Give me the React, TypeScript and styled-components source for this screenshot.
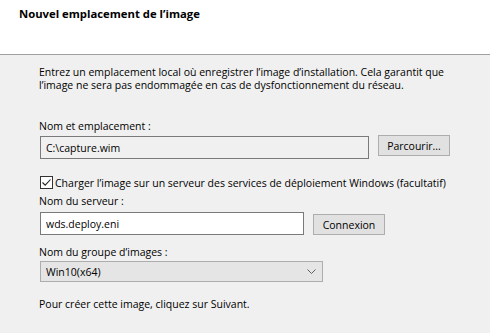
import React from 'react'
import styled, { createGlobalStyle } from 'styled-components'

const GlobalStyle = createGlobalStyle`
  html, body {
    margin: 0;
    padding: 0;
  }
  body {
    width: 490px;
    height: 333px;
    overflow: hidden;
    background: #f0f0f0;
    font-family: 'Open Sans', 'Noto Sans', sans-serif;
    font-size: 10.5px;
    color: #000000;
  }
`

const Page = styled.div`
  width: 490px;
  height: 333px;
  display: flex;
  flex-direction: column;
`

const Header = styled.header`
  height: 55px;
  box-sizing: border-box;
  background: #ffffff;
  border-bottom: 1px solid #a0a0a0;
  padding: 6px 0 0 19px;
`

const Title = styled.h1`
  margin: 0;
  font-size: 11.3px;
  font-weight: 700;
  line-height: 15px;
`

const Body = styled.main`
  display: flex;
  flex-direction: column;
  padding: 11px 0 0 39px;
`

const Text = styled.p<{ $gap?: number }>`
  margin: ${p => p.$gap ?? 0}px 0 0 0;
  line-height: 13px;
`

const Label = styled.label<{ $gap: number }>`
  display: block;
  margin-top: ${p => p.$gap}px;
  line-height: 12px;
`

const FieldRow = styled.div<{ $gap: number }>`
  display: flex;
  align-items: flex-start;
  gap: 9px;
  margin: ${p => p.$gap}px 0 0 1px;
`

const TextBox = styled.div<{ $width: number; $readOnly?: boolean }>`
  width: ${p => p.$width}px;
  height: 23px;
  box-sizing: border-box;
  border: 1px solid #7a7a7a;
  background: ${p => (p.$readOnly ? '#f0f0f0' : '#ffffff')};
  padding: 0 0 0 5px;
  display: flex;
  align-items: center;
`

const Button = styled.button<{ $width: number; $offset?: number }>`
  width: ${p => p.$width}px;
  height: 21px;
  margin-top: ${p => p.$offset ?? -1}px;
  box-sizing: border-box;
  border: 1px solid #adadad;
  background: #e1e1e1;
  font: inherit;
  color: #000000;
  padding: 0;
`

const CheckRow = styled.div<{ $gap: number }>`
  display: flex;
  align-items: center;
  gap: 2px;
  margin: ${p => p.$gap}px 0 0 1px;
  height: 13px;
`

const Box = styled.span`
  width: 13px;
  height: 13px;
  box-sizing: border-box;
  border: 1px solid #333333;
  background: #ffffff;
  display: flex;
  align-items: center;
  justify-content: center;
`

const Select = styled.div<{ $gap: number }>`
  width: 283px;
  height: 21px;
  margin: ${p => p.$gap}px 0 0 1px;
  box-sizing: border-box;
  border: 1px solid #adadad;
  background: #e5e5e5;
  display: flex;
  align-items: center;
  justify-content: space-between;
  padding: 0 6px 0 5px;
`

export default function App() {
  return (
    <>
      <GlobalStyle />
      <Page>
        <Header>
          <Title>Nouvel emplacement de l’image</Title>
        </Header>
        <Body>
          <Text>
            Entrez un emplacement local où enregistrer l’image d’installation. Cela garantit que
            <br />
            l’image ne sera pas endommagée en cas de dysfonctionnement du réseau.
          </Text>

          <Label $gap={28}>Nom et emplacement :</Label>
          <FieldRow $gap={4}>
            <TextBox $width={329} $readOnly>C:\capture.wim</TextBox>
            <Button $width={72}>Parcourir...</Button>
          </FieldRow>

          <CheckRow $gap={17}>
            <Box>
              <svg width="11" height="11" viewBox="0 0 11 11">
                <path d="M1.5 5.5 L4.2 8.2 L9.5 2.5" fill="none" stroke="#222" strokeWidth="1.1" />
              </svg>
            </Box>
            <span>Charger l’image sur un serveur des services de déploiement Windows (facultatif)</span>
          </CheckRow>

          <Label $gap={6}>Nom du serveur :</Label>
          <FieldRow $gap={5}>
            <TextBox $width={264}>wds.deploy.eni</TextBox>
            <Button $width={72} $offset={2}>Connexion</Button>
          </FieldRow>

          <Label $gap={11}>Nom du groupe d’images :</Label>
          <Select $gap={3}>
            <span>Win10(x64)</span>
            <svg width="9" height="5" viewBox="0 0 9 5">
              <path d="M0.5 0.5 L4.5 4.5 L8.5 0.5" fill="none" stroke="#606060" strokeWidth="1" />
            </svg>
          </Select>

          <Text $gap={16}>Pour créer cette image, cliquez sur Suivant.</Text>
        </Body>
      </Page>
    </>
  )
}
